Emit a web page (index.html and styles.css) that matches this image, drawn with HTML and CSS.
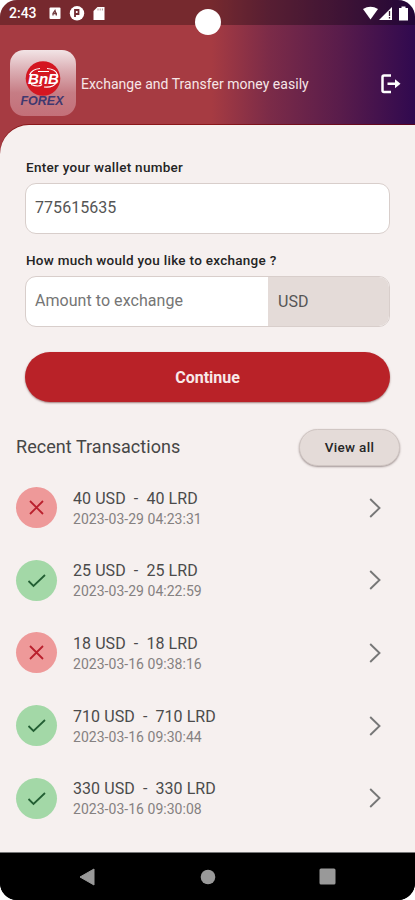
FILE: index.html
```html
<!DOCTYPE html>
<html lang="en">
<head>
<meta charset="utf-8">
<title>BnB Forex</title>
<link rel="stylesheet" href="styles.css">
</head>
<body>
<div class="phone">
  <div class="camera"></div>
  <div class="status">
    <span class="clock">2:43</span>
    <svg class="status-left" width="58" height="16" viewBox="0 0 58 16">
      <rect x="1.500" y="2.500" width="11" height="11.500" rx="1" fill="#fff"/>
      <path d="M5 10.500v-2l2-3 1.500 5M5 8.500h4" fill="none" stroke="#744044" stroke-width="1.300"/>
      <circle cx="29" cy="8.300" r="7.200" fill="#fff"/>
      <path d="M27 12V5h3.500v4H27" fill="none" stroke="#732c32" stroke-width="1.800"/>
      <path d="M45.500 6 49.500 2H56.500V15H45.500Z" fill="#fff"/>
      <path d="M50 3.500v2M52.200 3.500v2M54.400 3.500v2" stroke="#9a7779" stroke-width=".8"/>
    </svg>
    <svg class="status-right" width="48" height="16" viewBox="0 0 48 16">
      <path d="M1 4Q8.500-.5 16 4L8.500 14.500Z" fill="#fff"/>
      <path d="M17 15 30 2V15Z" fill="#fff"/>
      <path d="M27.500 6v5M27.500 12v1.500" stroke="#35152f" stroke-width="1.300"/>
      <path d="M37 3H39.500V1.500H43.500V3H46V15.500H37Z" fill="#fff"/>
    </svg>
  </div>
  <header class="header">
    <svg class="logo" width="66" height="66" viewBox="0 0 66 66">
      <defs>
        <linearGradient id="tile" x1="0" y1="0" x2="0" y2="1">
          <stop offset="0" stop-color="#f2e4e6"/>
          <stop offset=".3" stop-color="#dcb0b5"/>
          <stop offset=".65" stop-color="#c67c84"/>
          <stop offset="1" stop-color="#c37079"/>
        </linearGradient>
      </defs>
      <rect width="66" height="66" rx="14" fill="url(#tile)"/>
      <circle cx="33" cy="28.500" r="17.300" fill="#d41621"/>
      <path d="M19.500 25Q22 19 30 18.500M37 18.500Q46 19 47.500 25M21 34.500Q29 37.500 32 34.500M34 37Q43 38 46.500 32.500" fill="none" stroke="#fff" stroke-width="1.200"/>
      <path d="M28 21.500H39" stroke="#fff" stroke-width="1.200"/>
      <text class="logo-mark" x="18" y="34" textLength="31" lengthAdjust="spacingAndGlyphs">BnB</text>
      <text class="logo-name" x="10.500" y="54.500" textLength="43" lengthAdjust="spacingAndGlyphs">FOREX</text>
    </svg>
    <span class="tagline">Exchange and Transfer money easily</span>
    <svg class="logout" width="20" height="20" viewBox="0 0 20 20">
      <path d="M10 1.500H3Q1.500 1.500 1.500 3V16.500Q1.500 18 3 18H10" fill="none" stroke="#fff" stroke-width="2.500"/>
      <path d="M6.500 9.700H15" stroke="#fff" stroke-width="2.500"/>
      <path d="M14 5.200 19.500 9.700 14 14.200Z" fill="#fff"/>
    </svg>
  </header>
  <main class="panel">
    <section class="form">
      <div class="label">Enter your wallet number</div>
      <div class="field"><span class="wallet">775615635</span></div>
      <div class="label">How much would you like to exchange ?</div>
      <div class="field">
        <span class="amount">Amount to exchange</span>
        <span class="currency">USD</span>
      </div>
      <div class="continue">Continue</div>
    </section>
    <section class="recent">
      <div class="recent-head">
        <span class="recent-title">Recent Transactions</span>
        <span class="view-all">View all</span>
      </div>
      <div class="row">
        <svg class="badge failed" viewBox="0 0 41 41"><path d="M14 14 27 27M27 14 14 27"/></svg>
        <div class="info"><span class="pair">40 USD&nbsp; -&nbsp; 40 LRD</span><span class="date">2023-03-29 04:23:31</span></div>
        <svg class="chevron" viewBox="0 0 12 20"><path d="M1.200 1 10.500 10 1.200 19"/></svg>
      </div>
      <div class="row">
        <svg class="badge done" viewBox="0 0 41 41"><path d="M12.500 21 17.500 26 29 15"/></svg>
        <div class="info"><span class="pair">25 USD&nbsp; -&nbsp; 25 LRD</span><span class="date">2023-03-29 04:22:59</span></div>
        <svg class="chevron" viewBox="0 0 12 20"><path d="M1.200 1 10.500 10 1.200 19"/></svg>
      </div>
      <div class="row">
        <svg class="badge failed" viewBox="0 0 41 41"><path d="M14 14 27 27M27 14 14 27"/></svg>
        <div class="info"><span class="pair">18 USD&nbsp; -&nbsp; 18 LRD</span><span class="date">2023-03-16 09:38:16</span></div>
        <svg class="chevron" viewBox="0 0 12 20"><path d="M1.200 1 10.500 10 1.200 19"/></svg>
      </div>
      <div class="row">
        <svg class="badge done" viewBox="0 0 41 41"><path d="M12.500 21 17.500 26 29 15"/></svg>
        <div class="info"><span class="pair">710 USD&nbsp; -&nbsp; 710 LRD</span><span class="date">2023-03-16 09:30:44</span></div>
        <svg class="chevron" viewBox="0 0 12 20"><path d="M1.200 1 10.500 10 1.200 19"/></svg>
      </div>
      <div class="row">
        <svg class="badge done" viewBox="0 0 41 41"><path d="M12.500 21 17.500 26 29 15"/></svg>
        <div class="info"><span class="pair">330 USD&nbsp; -&nbsp; 330 LRD</span><span class="date">2023-03-16 09:30:08</span></div>
        <svg class="chevron" viewBox="0 0 12 20"><path d="M1.200 1 10.500 10 1.200 19"/></svg>
      </div>
    </section>
  </main>
  <nav class="navbar">
    <svg width="17" height="18" viewBox="0 0 17 18"><path d="M1 9 15 1V17Z" fill="#999" stroke="#999" stroke-linejoin="round"/></svg>
    <svg width="16" height="16" viewBox="0 0 16 16"><circle cx="8" cy="8" r="7.300" fill="#999"/></svg>
    <svg width="17" height="17" viewBox="0 0 17 17"><rect x=".5" y=".5" width="16" height="16" rx="1.500" fill="#999"/></svg>
  </nav>
</div>
</body>
</html>
```
FILE: styles.css
```css
* { box-sizing: border-box; }

body {
  margin: 0;
  background: #fff;
  font-family: Roboto, "Liberation Sans", sans-serif;
}

svg { display: block; flex: none; }

.phone {
  position: relative;
  display: flex;
  flex-direction: column;
  width: 415px;
  height: 900px;
  overflow: hidden;
  border-radius: 17px;
  background: linear-gradient(90deg, #a63b42 0, #a63b42 51%, #7b2b48 65%, #591c4b 82%, #30094f 100%) 0 0 / 100% 180px no-repeat #000;
}

.camera {
  position: absolute;
  top: 9px;
  left: 195px;
  width: 26px;
  height: 26px;
  border-radius: 50%;
  background: #fff;
}

.status {
  display: flex;
  align-items: center;
  height: 25px;
  padding: 0 5px 0 9px;
  background: rgba(0, 0, 0, .29);
}

.clock {
  width: 39px;
  padding-top: 1px;
  font-size: 14px;
  font-weight: 500;
  color: #fff;
}

.status-right { margin-left: auto; }

.header {
  display: flex;
  align-items: flex-start;
  height: 100px;
  padding: 16px 14px 0 10px;
}

.header .logo { margin-top: 9px; }

.logo-mark { font: italic 700 15px "Liberation Sans", sans-serif; fill: #fff; }
.logo-name { font: italic 700 12.500px "Liberation Sans", sans-serif; fill: #40386f; }

.tagline {
  margin: 33px 0 0 5px;
  font-size: 14px;
  line-height: 20px;
  letter-spacing: .03px;
  white-space: nowrap;
  color: #f7e6e7;
}

.logout { margin: 33px 0 0 auto; }

.panel {
  height: 727px;
  border-top-left-radius: 29px;
  background: #f6f0ef;
  box-shadow: 0 -1px 0 rgba(120, 0, 0, .6);
}

.form { padding: 32px 25px 0; }

.label {
  height: 18px;
  padding-left: 1px;
  font-size: 13.500px;
  line-height: 21px;
  font-weight: 500;
  letter-spacing: .28px;
  white-space: nowrap;
  color: #242424;
}

.field {
  display: flex;
  height: 51px;
  margin-top: 8px;
  overflow: hidden;
  border: 1px solid #d8cecb;
  border-radius: 11px;
  background: #fff;
  font-size: 16px;
  line-height: 47px;
  color: #555;
}

.field + .label { margin-top: 16px; }
.wallet { padding-left: 9px; letter-spacing: .05px; }
.amount { width: 242px; padding-left: 9px; color: #757575; letter-spacing: .05px; white-space: nowrap; }
.currency { flex: 1; padding-left: 10px; background: #e4dbd8; line-height: 49px; }

.continue {
  height: 50px;
  margin-top: 25px;
  border-radius: 25px;
  background: #b92228;
  box-shadow: 0 1px 2px rgba(90, 30, 30, .55);
  font-size: 16px;
  font-weight: 700;
  line-height: 51px;
  text-align: center;
  color: #f8e9e9;
}

.recent { padding: 26px 15px 0 16px; }

.recent-head {
  display: flex;
  justify-content: space-between;
  align-items: center;
  height: 38px;
  margin-bottom: 5.200px;
}

.recent-title {
  padding-bottom: 2px;
  font-size: 18px;
  letter-spacing: .05px;
  color: #464646;
}

.view-all {
  width: 101px;
  height: 37px;
  border: 1px solid #d0c6c3;
  border-radius: 19px;
  background: #e4dbd8;
  box-shadow: 0 1px 2px rgba(80, 60, 60, .5);
  font-size: 13.500px;
  font-weight: 500;
  letter-spacing: .3px;
  line-height: 35px;
  text-align: center;
  color: #262626;
}

.row {
  display: flex;
  align-items: center;
  height: 72.700px;
}

.badge { width: 41px; height: 41px; border-radius: 50%; }
.badge path { fill: none; stroke-width: 1.800; }
.failed { background: #ee9999; }
.failed path { stroke: #ba202d; }
.done { background: #a3d8a7; }
.done path { stroke: #235f34; }

.info {
  display: flex;
  flex-direction: column;
  flex: 1;
  padding: 1.400px 0 0 16px;
}

.pair { font-size: 16px; line-height: 21px; letter-spacing: .07px; color: #4b4b4b; }
.date { font-size: 14px; line-height: 20px; letter-spacing: .03px; color: #858181; }

.chevron { width: 12px; height: 20px; margin-right: 19px; }
.chevron path { fill: none; stroke: #777; stroke-width: 1.900; }

.navbar {
  display: flex;
  justify-content: space-between;
  align-items: center;
  height: 48px;
  padding: 0 79px;
  border-top: 1px solid #777;
  background: #000;
}
```
